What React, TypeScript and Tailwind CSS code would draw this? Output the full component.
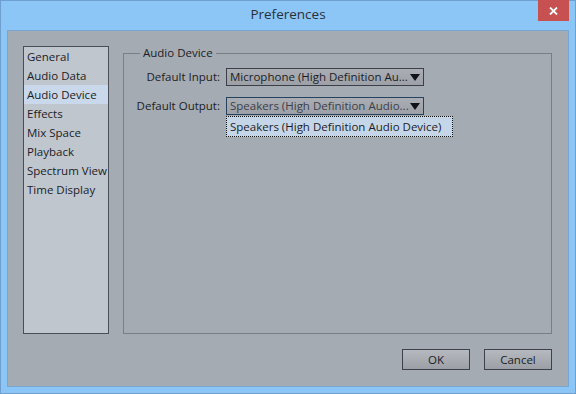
import React from "react";

const sections = [
  "General",
  "Audio Data",
  "Audio Device",
  "Effects",
  "Mix Space",
  "Playback",
  "Spectrum View",
  "Time Display",
];

function Arrow() {
  return (
    <svg width="10" height="7" viewBox="0 0 10 7" className="shrink-0">
      <path d="M0 0 H10 L5 7 Z" fill="#101218" />
    </svg>
  );
}

function Combo({ text, focused }: { text: string; focused?: boolean }) {
  return (
    <div
      className={`flex h-[18px] w-[198px] items-center justify-between border bg-gradient-to-b from-[#aaaeb4] to-[#9da1a7] pl-[3px] pr-[3px] ${
        focused ? "border-[#25425f] text-[#3c404a]" : "border-[#3b3f48] text-[#1b1d26]"
      }`}
    >
      <span className="whitespace-nowrap">{text}</span>
      <Arrow />
    </div>
  );
}

function Button({ label }: { label: string }) {
  return (
    <button className="h-[21px] w-[68px] border border-[#3d4149] bg-gradient-to-b from-[#b6bac0] to-[#9ca0a6] text-[#1b1d26]">
      {label}
    </button>
  );
}

export default function App() {
  return (
    <div
      className="flex h-[394px] w-[576px] flex-col border border-[#6f9fce] bg-[#8bc6f7] text-[11.5px] leading-none"
      style={{ fontFamily: '"Open Sans", "Noto Sans", sans-serif' }}
    >
      <div className="relative flex h-[29px] shrink-0 items-center justify-center">
        <span className="mt-[-1px] text-[13.5px] text-[#2b2f38]">Preferences</span>
        <div className="absolute right-[6px] top-[-1px] flex h-[21px] w-[31px] items-center justify-center bg-[#c75050]">
          <svg width="9" height="8" viewBox="0 0 9 8">
            <path d="M1 0.5 L8 7.5 M8 0.5 L1 7.5" stroke="white" strokeWidth="1.8" />
          </svg>
        </div>
      </div>

      <div className="ml-[6px] flex h-[357px] w-[562px] shrink-0 flex-col border border-[#78a6d3] bg-[#a5abb2] pl-[15px] pr-[16px] pt-[15px]">
        <div className="flex gap-[14px]">
          <div className="h-[288px] w-[86px] shrink-0 border border-[#4a4e58] bg-[#c0c6ce]">
            {sections.map((s) => (
              <div
                key={s}
                className={`flex h-[19px] items-center whitespace-nowrap pl-[3px] text-[#1b1d26] ${
                  s === "Audio Device" ? "bg-[#c9d8ea]" : ""
                }`}
              >
                {s}
              </div>
            ))}
          </div>

          <div className="relative mt-[7px] h-[281px] flex-1 border border-[#7c7e83]">
            <span className="absolute left-[16px] top-[-7px] bg-[#a5abb2] px-[3px] text-[#1b1d26]">
              Audio Device
            </span>
            <div className="flex flex-col gap-[11px] pt-[14px]">
              <div className="flex items-center">
                <span className="w-[102px] pr-[6px] text-right text-[#1b1d26]">Default Input:</span>
                <Combo text="Microphone (High Definition Au..." />
              </div>
              <div className="relative flex items-center">
                <span className="w-[102px] pr-[6px] text-right text-[#1b1d26]">Default Output:</span>
                <Combo text="Speakers (High Definition Audio..." focused />
                <div className="absolute left-[102px] top-[19px] flex h-[21px] w-[227px] items-center border border-dotted border-[#111] bg-[#c6d6e9] pl-[3px] text-[#1b1d26]">
                  Speakers (High Definition Audio Device)
                </div>
              </div>
            </div>
          </div>
        </div>

        <div className="mt-[15px] flex justify-end gap-[14px]">
          <Button label="OK" />
          <Button label="Cancel" />
        </div>
      </div>
    </div>
  );
}
